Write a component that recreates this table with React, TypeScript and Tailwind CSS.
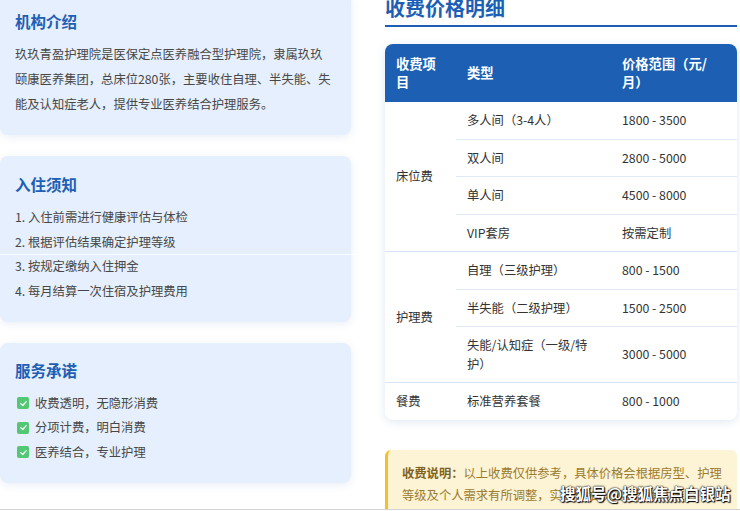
import React from "react";

const Check = () => (
  <span className="inline-flex w-[12px] h-[12px] rounded-[2px] bg-[#52c872] items-center justify-center shrink-0">
    <svg width="9" height="9" viewBox="0 0 10 10" fill="none">
      <path d="M2 5.2 L4.2 7.2 L8 3" stroke="white" strokeWidth="1.4" strokeLinecap="round" strokeLinejoin="round" />
    </svg>
  </span>
);

const Card = ({ title, children, className = "" }: { title: string; children: React.ReactNode; className?: string }) => (
  <div className={"bg-[#e5effd] rounded-[8px] pl-[15px] pr-[20px] shadow-[0_2px_8px_rgba(40,90,170,0.10)] " + className}>
    <h3 className="text-[15.5px] font-bold leading-[24px] text-[#1d5fb5] mb-[9px]">{title}</h3>
    {children}
  </div>
);

type Row = { cat?: string; span?: number; type: React.ReactNode; price: string; groupEnd?: boolean };

const rows: Row[] = [
  { cat: "床位费", span: 4, type: "多人间（3-4人）", price: "1800 - 3500" },
  { type: "双人间", price: "2800 - 5000" },
  { type: "单人间", price: "4500 - 8000" },
  { type: "VIP套房", price: "按需定制", groupEnd: true },
  { cat: "护理费", span: 3, type: "自理（三级护理）", price: "800 - 1500" },
  { type: "半失能（二级护理）", price: "1500 - 2500" },
  { type: "失能/认知症（一级/特护）", price: "3000 - 5000", groupEnd: true },
  { cat: "餐费", span: 1, type: "标准营养套餐", price: "800 - 1000", groupEnd: true },
];

export default function App() {
  return (
    <div className="relative w-[740px] h-[511px] overflow-hidden bg-white font-['Noto_Sans_CJK_SC','Noto_Sans',sans-serif]">
      <div className="flex items-start gap-[34px]">
        {/* Left column */}
        <div className="w-[351px] flex flex-col gap-[21px] -mt-[8px]">
          <Card title="机构介绍" className="pt-[17px] pb-[18px]">
            <p className="text-[12.3px] leading-[25px] text-[#474747]">
              玖玖青盈护理院是医保定点医养融合型护理院，隶属玖玖颐康医养集团，总床位280张，主要收住自理、半失能、失能及认知症老人，提供专业医养结合护理服务。
            </p>
          </Card>
          <Card title="入住须知" className="pt-[16px] pb-[18px]">
            <ol className="text-[12.3px] leading-[24.7px] text-[#474747]">
              <li>1. 入住前需进行健康评估与体检</li>
              <li>2. 根据评估结果确定护理等级</li>
              <li>3. 按规定缴纳入住押金</li>
              <li>4. 每月结算一次住宿及护理费用</li>
            </ol>
          </Card>
          <Card title="服务承诺" className="pt-[15px] pb-[19px]">
            <ul className="text-[12.3px] leading-[24.5px] text-[#474747]">
              {["收费透明，无隐形消费", "分项计费，明白消费", "医养结合，专业护理"].map((t) => (
                <li key={t} className="flex items-center gap-[6px] pl-[2px]">
                  <Check />
                  <span>{t}</span>
                </li>
              ))}
            </ul>
          </Card>
        </div>

        {/* Right column */}
        <div className="w-[352px] -mt-[6px]">
          <h2 className="text-[20px] font-bold leading-[28px] text-[#1d5fb5] pb-[3px] border-b-2 border-[#1d5fb5]">
            收费价格明细
          </h2>
          <div className="mt-[17px] rounded-[8px] overflow-hidden bg-white shadow-[0_2px_8px_rgba(40,90,170,0.14)]">
            <table className="w-full table-fixed border-collapse">
              <colgroup>
                <col className="w-[71px]" />
                <col className="w-[155px]" />
                <col className="w-[126px]" />
              </colgroup>
              <thead>
                <tr className="bg-[#1d5fb3] text-white text-[13.3px] font-bold leading-[18.5px] text-left">
                  <th className="px-[11px] py-[10.5px] align-middle">收费项目</th>
                  <th className="px-[11px] py-[10.5px] align-middle">类型</th>
                  <th className="px-[11px] py-[10.5px] align-middle">价格范围（元/月）</th>
                </tr>
              </thead>
              <tbody className="text-[12.3px] leading-[18.5px] text-[#333]">
                {rows.map((r, i) => (
                  <tr key={i} className={r.groupEnd && i !== rows.length - 1 ? "border-b border-[#d6e4f7]" : ""}>
                    {r.cat && (
                      <td rowSpan={r.span} className="px-[11px] align-middle">
                        {r.cat}
                      </td>
                    )}
                    <td className={"px-[11px] py-[9px] align-middle " + (!r.groupEnd ? "border-b border-[#dfeaf8]" : "")}>{r.type}</td>
                    <td className={"px-[11px] py-[9px] align-middle " + (!r.groupEnd ? "border-b border-[#dfeaf8]" : "")}>{r.price}</td>
                  </tr>
                ))}
              </tbody>
            </table>
          </div>

          <div className="mt-[30px] bg-[#fdf3d5] border-l-[3px] border-[#f6bf26] rounded-[6px] pl-[14px] pr-[12px] pt-[12px] pb-[12px] text-[12.3px] leading-[22px] text-[#9a7b30]">
            <span className="font-bold text-[#7f6220]">收费说明：</span>
            以上收费仅供参考，具体价格会根据房型、护理等级及个人需求有所调整，实际价格以实地咨询为准。
          </div>
        </div>
      </div>

      {/* rendering artefact line */}
      <div className="absolute left-0 top-[254px] w-[362px] h-px bg-white/90" />

      {/* bottom rule */}
      <div className="absolute left-0 top-[509px] w-full h-px bg-[#d2d2d2]" />
      <div className="absolute left-0 top-[510px] w-full h-px bg-white" />

      {/* watermark */}
      <div className="absolute left-[560px] top-[482px] text-[15.5px] font-bold leading-[22px] text-white [text-shadow:0_0_2px_#000,0_0_1px_#000,1px_1px_1px_#000] whitespace-nowrap">
        搜狐号@搜狐焦点白银站
      </div>
    </div>
  );
}
